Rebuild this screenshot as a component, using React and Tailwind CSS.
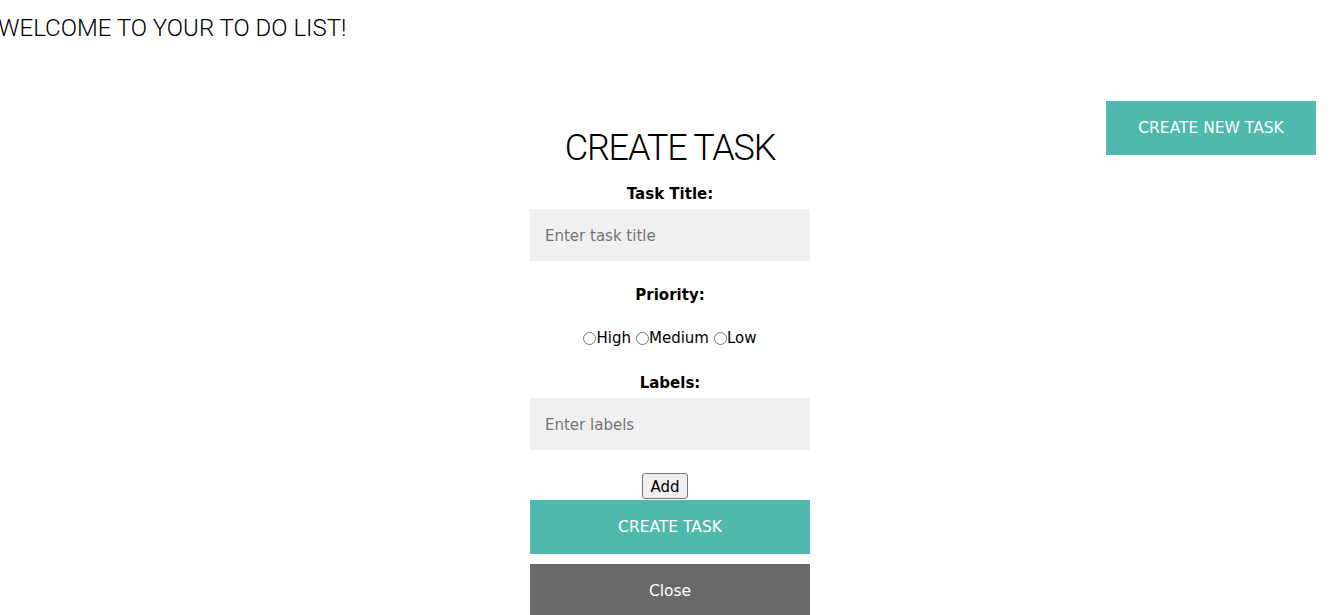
import React, { useState } from 'react';

const formFont = { fontFamily: '"DejaVu Sans", Verdana, sans-serif' };
const headFont = { fontFamily: 'Roboto, "Open Sans", sans-serif' };

export default function App() {
  const [title, setTitle] = useState('');
  const [label, setLabel] = useState('');
  const [priority, setPriority] = useState('');

  return (
    <div className="min-h-screen bg-white text-black" style={headFont}>
      <h1 className="-ml-[2px] h-[56px] text-[24px] font-light leading-[56px]">WELCOME TO YOUR TO DO LIST!</h1>

      <div className="grid grid-cols-[530px_280px_1fr]" style={formFont}>
        <div />

        <div className="flex flex-col items-center pt-[67px]">
          <h2
            className="h-[48px] whitespace-nowrap text-[36px] font-light leading-[50px] tracking-[-1.2px]"
            style={headFont}
          >
            CREATE TASK
          </h2>

          <label className="mt-[13px] h-[18px] text-[15px] font-bold leading-[20px]">Task Title:</label>
          <input
            value={title}
            onChange={(e) => setTitle(e.target.value)}
            placeholder="Enter task title"
            className="mt-[7px] h-[52px] w-full bg-[#f0f0f0] px-[15px] pt-[2px] text-[15px] outline-none placeholder:text-[#757575]"
          />

          <label className="mt-[24px] h-[18px] text-[15px] font-bold leading-[20px]">Priority:</label>

          <div className="mt-[26px] flex h-[18px] items-center text-[15px] leading-[20px]">
            {['High', 'Medium', 'Low'].map((p, i) => (
              <label key={p} className={`flex items-center ${i > 0 ? 'ml-[5px]' : ''}`}>
                <input
                  type="radio"
                  name="priority"
                  checked={priority === p}
                  onChange={() => setPriority(p)}
                  className="m-0 h-[13px] w-[13px]"
                />
                {p}
              </label>
            ))}
          </div>

          <label className="mt-[26px] h-[18px] text-[15px] font-bold leading-[20px]">Labels:</label>
          <input
            value={label}
            onChange={(e) => setLabel(e.target.value)}
            placeholder="Enter labels"
            className="mt-[7px] h-[52px] w-full bg-[#f0f0f0] px-[15px] pt-[2px] text-[15px] outline-none placeholder:text-[#757575]"
          />

          <button className="mr-[10px] mt-[23px] h-[26px] rounded-[3px] border border-[#767676] bg-[#efefef] px-[7px] text-[15px] leading-[26px]">
            Add
          </button>

          <button className="mt-[1px] h-[54px] w-full bg-[#50b8ac] pt-[2px] text-[15.5px] text-white">CREATE TASK</button>
          <button className="mt-[10px] h-[54px] w-full bg-[#696969] pt-[2px] text-[15.5px] text-white">Close</button>
        </div>

        <div className="flex justify-end pr-[15px]">
          <button className="mt-[45px] h-[54px] w-[210px] bg-[#50b8ac] pt-[2px] text-[15.5px] text-white">
            CREATE NEW TASK
          </button>
        </div>
      </div>
    </div>
  );
}
